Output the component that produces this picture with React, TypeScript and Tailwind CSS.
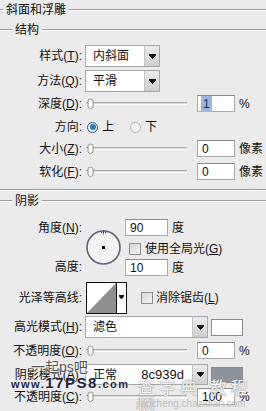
import React from 'react'

const U = ({ c }: { c: string }) => <span className="underline underline-offset-1">{c}</span>

function Label({ children, w = 'w-[82px]' }: { children: React.ReactNode; w?: string }) {
  return <div className={`${w} shrink-0 text-right leading-none`}>{children}</div>
}

function Header({ title, lead }: { title: string; lead: string }) {
  return (
    <div className="flex h-[20px] items-center">
      <div className={`${lead} h-[2px] border-t border-[#9b9b9b] border-b border-b-white`} />
      <div className="px-[3px] leading-none">{title}</div>
      <div className="h-[2px] flex-1 border-t border-[#9b9b9b] border-b border-b-white" />
    </div>
  )
}

function Select({ text, w, extra }: { text: string; w: string; extra?: string }) {
  return (
    <div className={`${w} flex h-full border border-[#a8a8a8] bg-white`}>
      <div className="flex flex-1 items-center justify-between pl-[7px] pr-[8px] leading-none">
        <span>{text}</span>
        {extra && <span className="text-[13px]">{extra}</span>}
      </div>
      <div className="flex w-[15px] items-center justify-center border-l border-[#c4c4c4] bg-gradient-to-b from-[#ececec] to-[#cfcfcf]">
        <svg width="7" height="5" viewBox="0 0 7 5">
          <path d="M0 0.5H7M0.5 1.5L3.5 4.5L6.5 1.5Z" stroke="#111" strokeWidth="1" fill="#111" />
        </svg>
      </div>
    </div>
  )
}

function Slider() {
  return (
    <div className="relative ml-[4px] flex h-full w-[101px] items-center">
      <div className="h-[3px] w-full border-t border-[#a9a9a9] border-b border-b-white bg-[#dcdcdc]" />
      <svg className="absolute left-[1px] top-1/2 -translate-y-1/2" width="7" height="11" viewBox="0 0 7 11">
        <path d="M1 2.5Q1 0.5 3.5 0.5Q6 0.5 6 2.5V8.5L3.5 10.5L1 8.5Z" fill="#fbfbfb" stroke="#8e8e8e" />
      </svg>
    </div>
  )
}

function Input({ v, w = 'w-[38px]', sel }: { v: string; w?: string; sel?: boolean }) {
  return (
    <div className={`${w} flex h-full items-center border border-[#a8a8a8] border-t-[#8a8a8a] bg-white pl-[3px] leading-none`}>
      {sel ? <span className="bg-[#9bb6df] px-[2px] py-[2px] text-[#1a2a55]">{v}</span> : <span className="pl-[1px]">{v}</span>}
    </div>
  )
}

function Check() {
  return <div className="h-[12px] w-[12px] shrink-0 border border-[#8f8f8f] bg-gradient-to-br from-[#d6d6d6] to-[#f4f4f4]" />
}

export default function App() {
  return (
    <div className="relative h-[411px] w-[266px] overflow-hidden bg-[#ebebeb] text-[12px] text-[#111] font-['Liberation_Sans','Noto_Sans_CJK_SC',sans-serif]">
      <Header title="斜面和浮雕" lead="w-[3px]" />
      <Header title="结构" lead="w-[12px]" />

      <div className="mt-[5px] flex h-[22px] items-center">
        <Label>样式(<U c="T" />):</Label>
        <div className="ml-[3px] h-full"><Select text="内斜面" w="w-[75px]" /></div>
      </div>
      <div className="mt-[3px] flex h-[22px] items-center">
        <Label>方法(<U c="Q" />):</Label>
        <div className="ml-[3px] h-full"><Select text="平滑" w="w-[75px]" /></div>
      </div>
      <div className="mt-[3px] flex h-[17px] items-center">
        <Label>深度(<U c="D" />):</Label>
        <Slider />
        <div className="ml-[10px] h-full"><Input v="1" sel /></div>
        <span className="ml-[4px]">%</span>
      </div>
      <div className="mt-[6px] flex h-[18px] items-center">
        <Label>方向:</Label>
        <div className="ml-[5px] flex items-center">
          <div className="flex h-[11px] w-[11px] items-center justify-center rounded-full border border-[#3d5a78] bg-[#e8eef4]">
            <div className="h-[6px] w-[6px] rounded-full bg-[#2a7fb8]" />
          </div>
          <span className="ml-[4px]">上</span>
          <div className="ml-[16px] h-[11px] w-[11px] rounded-full border border-[#b3b3b3] bg-[#f2f2f2]" />
          <span className="ml-[4px]">下</span>
        </div>
      </div>
      <div className="mt-[4px] flex h-[17px] items-center">
        <Label>大小(<U c="Z" />):</Label>
        <Slider />
        <div className="ml-[10px] h-full"><Input v="0" /></div>
        <span className="ml-[4px]">像素</span>
      </div>
      <div className="mt-[6px] flex h-[17px] items-center">
        <Label>软化(<U c="F" />):</Label>
        <Slider />
        <div className="ml-[10px] h-full"><Input v="0" /></div>
        <span className="ml-[4px]">像素</span>
      </div>

      <div className="mt-[9px] h-[2px] border-t border-[#9b9b9b] border-b border-b-white" />
      <Header title="阴影" lead="w-[12px]" />

      <div className="mt-[8px] flex h-[57px]">
        <div className="flex w-[82px] flex-col justify-between py-[3px] text-right leading-none">
          <span>角度(<U c="N" />):</span>
          <span>高度:</span>
        </div>
        <div className="ml-[3px] flex w-[37px] items-center justify-center">
          <svg width="37" height="37" viewBox="0 0 37 37">
            <circle cx="18.5" cy="18.5" r="16.5" fill="#f3f3f3" stroke="#5d6475" strokeWidth="1.6" />
            <path d="M16 3.5H21M18.5 1.5V6" stroke="#222" strokeWidth="1" strokeDasharray="1 1" />
            <rect x="17" y="17" width="3" height="3" fill="#000" />
          </svg>
        </div>
        <div className="ml-[3px] flex flex-col">
          <div className="flex h-[17px] items-center">
            <div className="h-full"><Input v="90" w="w-[43px]" /></div>
            <span className="ml-[4px]">度</span>
          </div>
          <div className="mt-[4px] flex h-[17px] items-center">
            <div className="ml-[4px]"><Check /></div>
            <span className="ml-[4px] leading-none">使用全局光(<U c="G" />)</span>
          </div>
          <div className="mt-[2px] flex h-[17px] items-center">
            <div className="h-full"><Input v="10" w="w-[43px]" /></div>
            <span className="ml-[4px]">度</span>
          </div>
        </div>
      </div>

      <div className="mt-[6px] flex h-[32px] items-center">
        <Label>光泽等高线:</Label>
        <svg className="ml-[4px]" width="41" height="32" viewBox="0 0 41 32">
          <rect x="0.5" y="0.5" width="40" height="31" fill="#fff" stroke="#111" />
          <polygon points="1,31 30,1 30,31" fill="#8f8f8f" />
          <line x1="30.5" y1="1" x2="30.5" y2="31" stroke="#111" />
          <path d="M33 13.5H38M33.5 14.5L35.5 17L37.5 14.5Z" stroke="#111" strokeWidth="1" fill="#111" />
        </svg>
        <div className="ml-[14px]"><Check /></div>
        <span className="ml-[3px] leading-none">消除锯齿(<U c="L" />)</span>
      </div>

      <div className="mt-[2px] flex h-[22px] items-center">
        <Label>高光模式(<U c="H" />):</Label>
        <div className="ml-[3px] h-full"><Select text="滤色" w="w-[123px]" /></div>
        <div className="ml-[3px] h-[17px] w-[32px] border border-[#8a8a8a] bg-white" />
      </div>
      <div className="mt-[4px] flex h-[17px] items-center">
        <Label>不透明度(<U c="O" />):</Label>
        <Slider />
        <div className="ml-[10px] h-full"><Input v="0" /></div>
        <span className="ml-[4px]">%</span>
      </div>
      <div className="mt-[5px] flex h-[21px] items-center">
        <Label>阴影模式(<U c="A" />):</Label>
        <div className="ml-[3px] h-full"><Select text="正常" extra="8c939d" w="w-[123px]" /></div>
        <div className="ml-[3px] h-[16px] w-[32px] border border-[#8a8a8a] bg-[#8c939d]" />
      </div>
      <div className="mt-[3px] flex h-[17px] items-center">
        <Label>不透明度(<U c="C" />):</Label>
        <Slider />
        <div className="ml-[10px] h-full"><Input v="100" /></div>
        <span className="ml-[4px]">%</span>
      </div>

      {/* watermarks */}
      <div className="absolute left-[31px] top-[360px] text-[14px] leading-none text-[#555] [text-shadow:0_0_2px_#fff,0_0_2px_#fff]">一起ps吧</div>
      <div className="absolute left-[11px] top-[375px] text-[15px] font-bold leading-none tracking-[1.5px] text-[#1d2240] [text-shadow:0_0_2px_#fff]">
        <span className="text-[11px]">www.</span>17PS8<span className="text-[11px]">.com</span>
      </div>
      <div className="absolute left-[138px] top-[380px] text-[17px] leading-none tracking-[4px] text-[#f4f4f4] [text-shadow:0_0_1px_#888,0_0_1px_#888]">查字典 教程网</div>
      <div className="absolute left-[136px] top-[399px] text-[10px] leading-none text-[#bdbdbd]">jiaocheng.chazidian.com</div>
    </div>
  )
}
